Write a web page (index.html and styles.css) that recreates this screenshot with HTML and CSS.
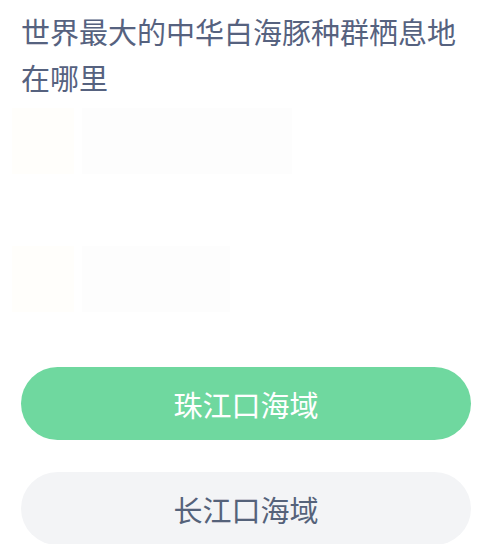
FILE: index.html
```html
<!DOCTYPE html>
<html lang="zh-CN">
<head>
  <meta charset="UTF-8">
  <title>答题</title>
  <link rel="stylesheet" href="styles.css">
</head>
<body>
  <div class="quiz">
    <h1 class="question">世界最大的中华白海豚种群栖息地在哪里</h1>

    <!-- faded background cards -->
    <div class="ghost">
      <div class="ghost-row">
        <div class="ghost-side"></div>
        <div class="ghost-card wide"></div>
      </div>
      <div class="ghost-row">
        <div class="ghost-side"></div>
        <div class="ghost-card"></div>
      </div>
    </div>

    <div class="options">
      <button class="option correct">珠江口海域</button>
      <button class="option">长江口海域</button>
    </div>
  </div>
</body>
</html>
```

FILE: styles.css
```css
body {
  margin: 0;
  background: #fff;
  font-family: "Noto Sans CJK SC", "Noto Sans", sans-serif;
}
.quiz {
  width: 490px;
  height: 544px;
  overflow: hidden;
}
.question {
  margin: 0;
  padding: 8px 17px 0 21px;
  font-size: 29px;
  font-weight: 400;
  line-height: 46px;
  color: #56627f;
}
.ghost {
  height: 267px;
  display: flex;
  flex-direction: column;
  gap: 72px;
  padding-top: 8px;
  box-sizing: border-box;
}
.ghost-row {
  display: flex;
  gap: 8px;
  height: 66px;
}
.ghost-side {
  width: 62px;
  margin-left: 12px;
  background: #fffefb;
}
.ghost-card {
  width: 148px;
  background: #fdfdfd;
}
.ghost-card.wide {
  width: 210px;
}
.options {
  display: flex;
  flex-direction: column;
  gap: 32px;
  padding: 0 19px 0 21px;
}
.option {
  height: 73px;
  border: none;
  border-radius: 37px;
  background: #f3f4f6;
  color: #55627a;
  font-family: inherit;
  font-size: 29px;
  cursor: pointer;
}
.option.correct {
  background: #6fd89f;
  color: #fff;
}
```
